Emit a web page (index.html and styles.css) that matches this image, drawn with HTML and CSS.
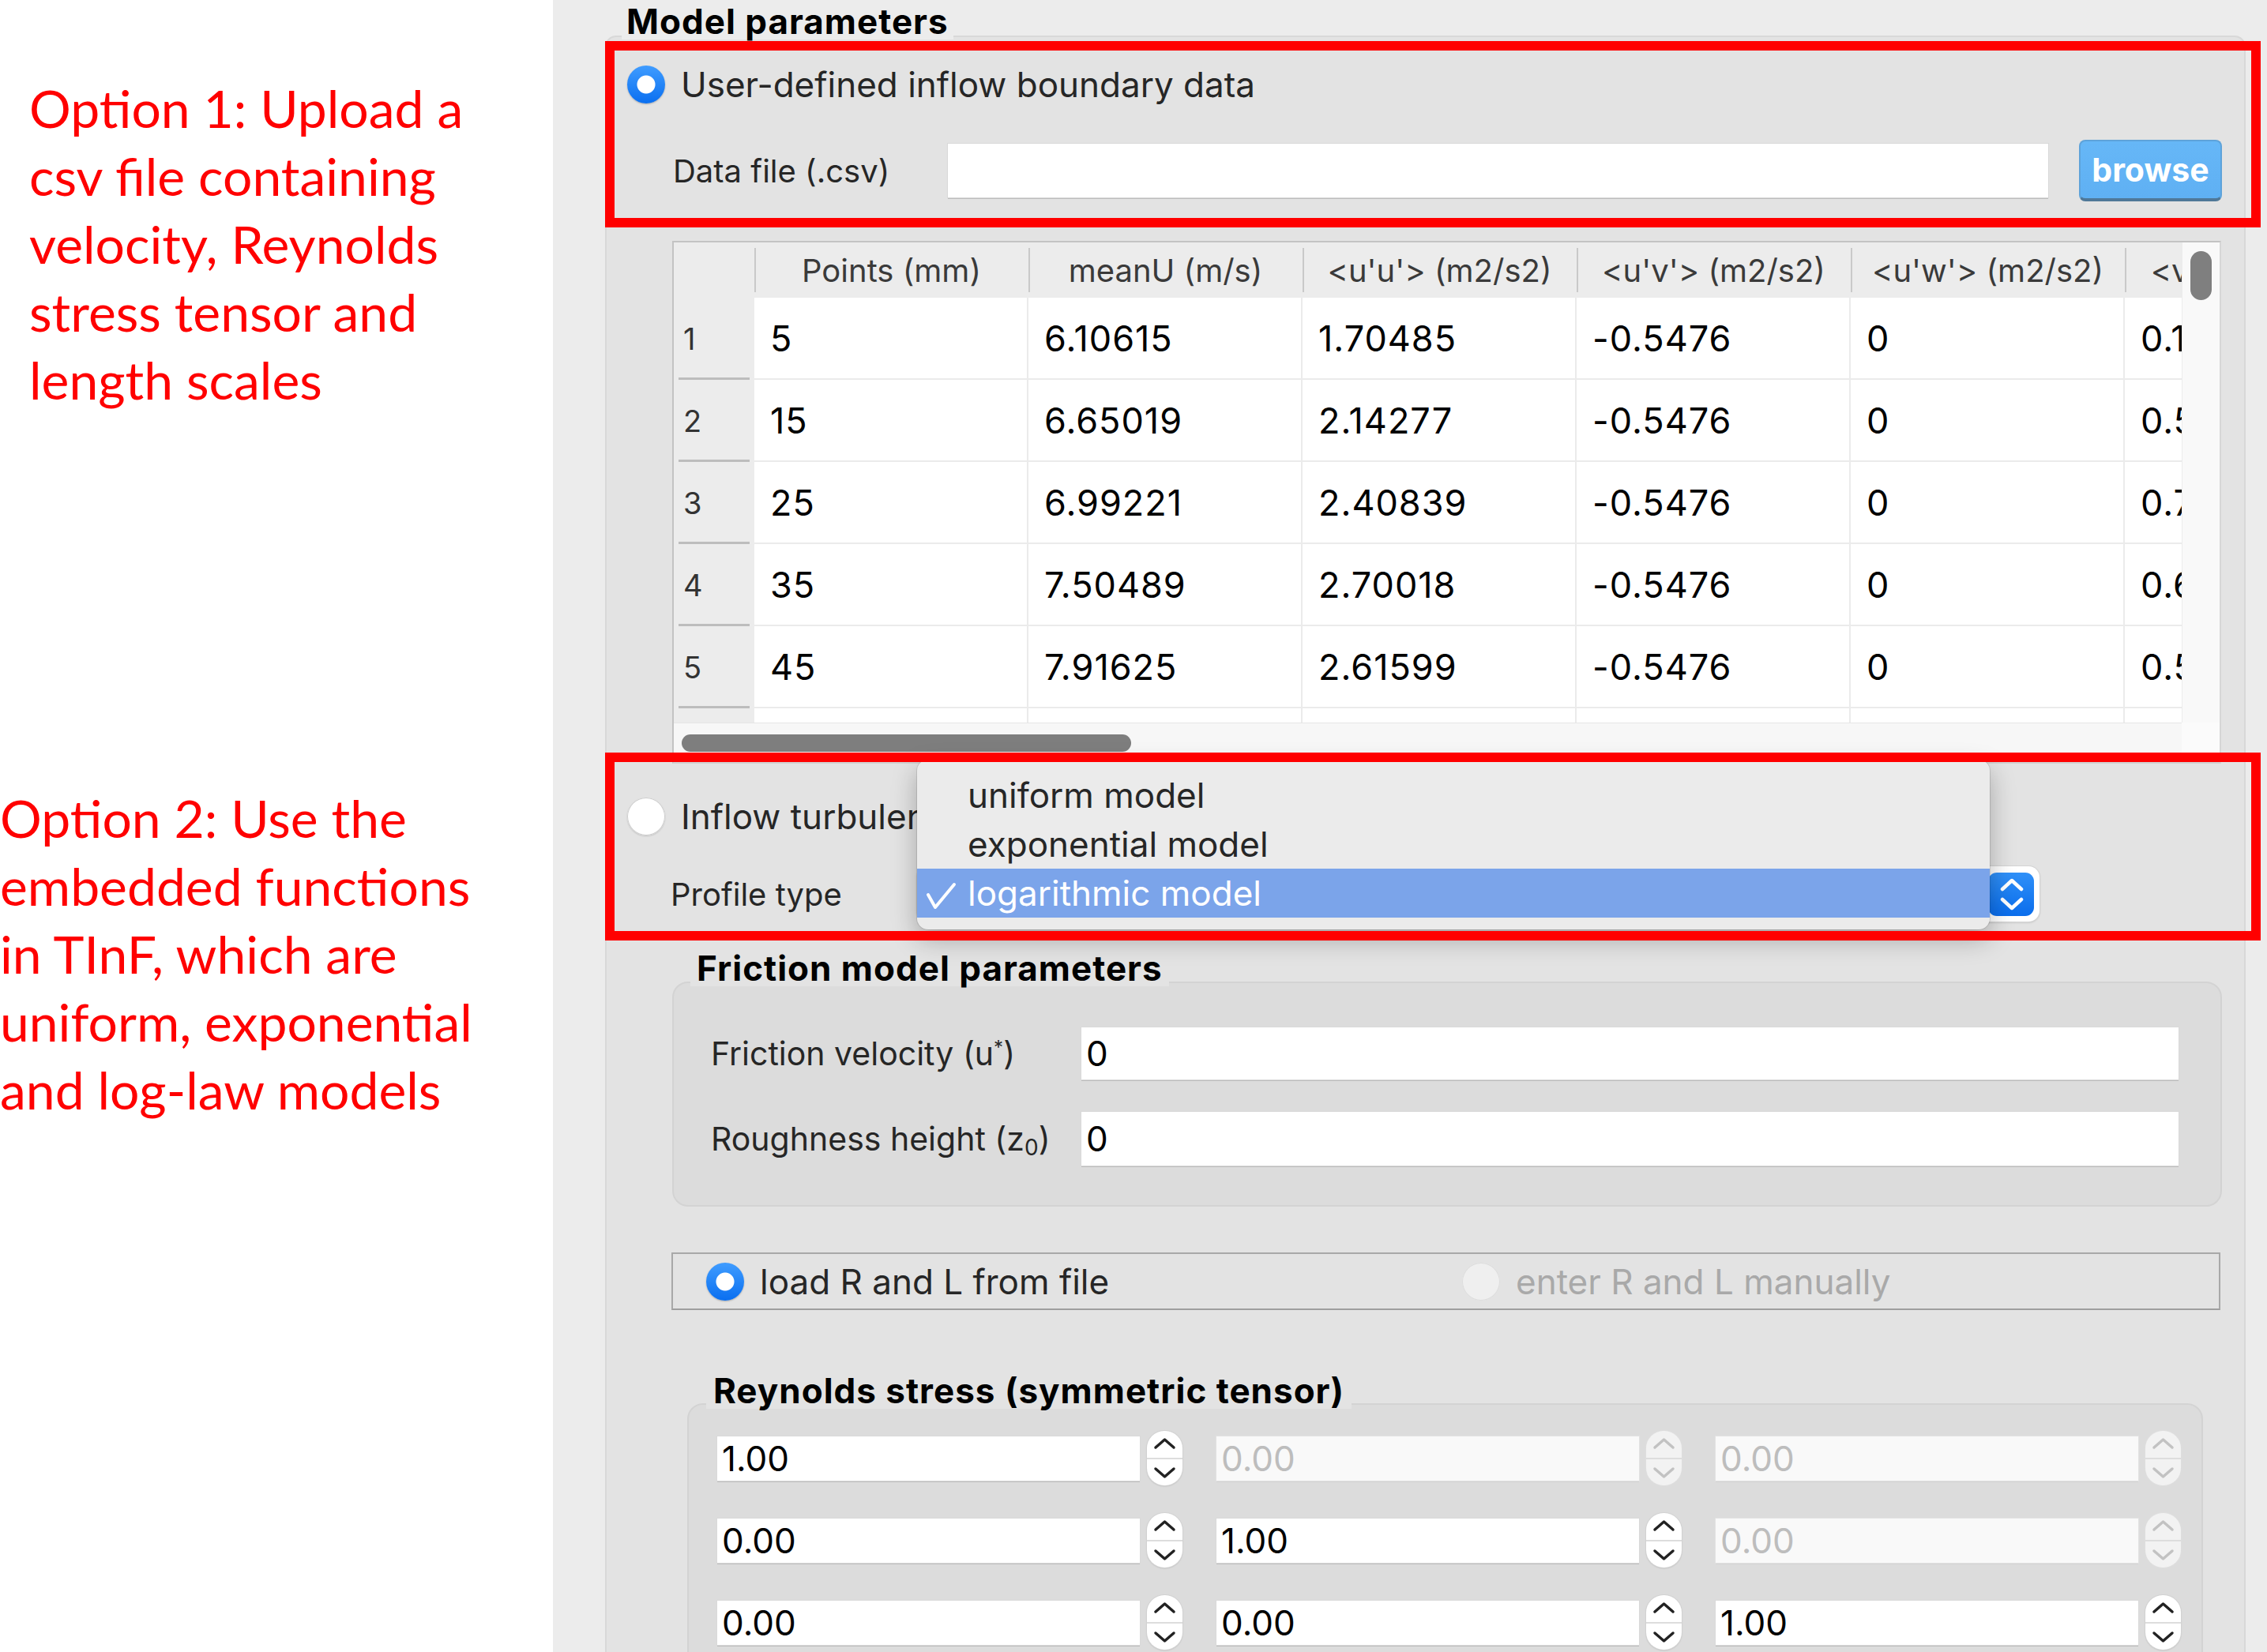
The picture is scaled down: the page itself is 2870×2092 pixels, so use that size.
FILE: index.html
```html
<!DOCTYPE html>
<html lang="en">
<head>
<meta charset="utf-8">
<title>TInF inflow options</title>
<link rel="stylesheet" href="styles.css">
</head>
<body>
<div class="page">
  <aside class="notes">
    <p class="note note1">Option 1: Upload a<br>csv file containing<br>velocity, Reynolds<br>stress tensor and<br>length scales</p>
    <p class="note note2">Option 2: Use the<br>embedded functions<br>in TInF, which are<br>uniform, exponential<br>and log-law models</p>
  </aside>

  <main class="panel">
    <section class="group model">
      <h2 class="group-title model-title">Model parameters</h2>

      <div class="radio-row row-user">
        <span class="radio on"></span>
        <span class="radio-text">User-defined inflow boundary data</span>
      </div>

      <div class="file-row">
        <span class="label file-label">Data file (.csv)</span>
        <div class="field file-field"></div>
        <button class="browse">browse</button>
      </div>

      <div class="tbl">
        <div class="tbl-body">
          <div class="th corner"></div>
          <div class="th">Points (mm)</div>
          <div class="th">meanU (m/s)</div>
          <div class="th">&lt;u'u'&gt; (m2/s2)</div>
          <div class="th">&lt;u'v'&gt; (m2/s2)</div>
          <div class="th">&lt;u'w'&gt; (m2/s2)</div>
          <div class="th">&lt;v'v'&gt; (m2/s2)</div>

          <div class="rh">1</div><div class="td">5</div><div class="td">6.10615</div><div class="td">1.70485</div><div class="td">-0.5476</div><div class="td">0</div><div class="td">0.1</div>
          <div class="rh">2</div><div class="td">15</div><div class="td">6.65019</div><div class="td">2.14277</div><div class="td">-0.5476</div><div class="td">0</div><div class="td">0.5</div>
          <div class="rh">3</div><div class="td">25</div><div class="td">6.99221</div><div class="td">2.40839</div><div class="td">-0.5476</div><div class="td">0</div><div class="td">0.7</div>
          <div class="rh">4</div><div class="td">35</div><div class="td">7.50489</div><div class="td">2.70018</div><div class="td">-0.5476</div><div class="td">0</div><div class="td">0.6</div>
          <div class="rh">5</div><div class="td">45</div><div class="td">7.91625</div><div class="td">2.61599</div><div class="td">-0.5476</div><div class="td">0</div><div class="td">0.5</div>
          <div class="rh"></div><div class="td"></div><div class="td"></div><div class="td"></div><div class="td"></div><div class="td"></div><div class="td"></div>
        </div>
        <div class="vscroll"><div class="vthumb"></div></div>
        <div class="hscroll"><div class="hthumb"></div></div>
        <div class="corner-sq"></div>
      </div>

      <div class="radio-row row-inflow">
        <span class="radio off"></span>
        <span class="radio-text">Inflow turbulence profile</span>
      </div>

      <div class="profile-row">
        <span class="label profile-label">Profile type</span>
        <div class="popup-btn">
          <span class="popup-arrows">
            <svg viewBox="0 0 58 55" width="58" height="55"><polyline points="18,21 30,10 42,21"/><polyline points="18,34 30,45 42,34"/></svg>
          </span>
          <ul class="menu">
            <li>uniform model</li>
            <li>exponential model</li>
            <li class="sel"><svg class="check" viewBox="0 0 40 36" width="40" height="36"><polyline points="3,16 12,32 36,3"/></svg>logarithmic model</li>
          </ul>
        </div>
      </div>

      <section class="group friction">
        <h3 class="group-title sub-title">Friction model parameters</h3>
        <div class="param-row first">
          <span class="label param-label">Friction velocity (u<sup>*</sup>)</span>
          <div class="field param-field">0</div>
        </div>
        <div class="param-row second">
          <span class="label param-label">Roughness height (z<sub>0</sub>)</span>
          <div class="field param-field tall">0</div>
        </div>
      </section>

      <div class="load-box">
        <label class="opt opt-file"><span class="radio on"></span><span class="radio-text">load R and L from file</span></label>
        <label class="opt opt-manual"><span class="radio dis"></span><span class="radio-text">enter R and L manually</span></label>
      </div>

      <section class="group reynolds">
        <h3 class="group-title sub-title rey-title">Reynolds stress (symmetric tensor)</h3>
        <div class="spin-row">
          <div class="spinbox"><div class="field spin-field">1.00</div><span class="stepper"><svg viewBox="0 0 45 69"><line x1="0" y1="35" x2="45" y2="35" class="div"/><polyline points="11,21 22.5,11 34,21"/><polyline points="11,48 22.5,58 34,48"/></svg></span></div>
          <div class="spinbox dis"><div class="field spin-field">0.00</div><span class="stepper"><svg viewBox="0 0 45 69"><line x1="0" y1="35" x2="45" y2="35" class="div"/><polyline points="11,21 22.5,11 34,21"/><polyline points="11,48 22.5,58 34,48"/></svg></span></div>
          <div class="spinbox dis"><div class="field spin-field">0.00</div><span class="stepper"><svg viewBox="0 0 45 69"><line x1="0" y1="35" x2="45" y2="35" class="div"/><polyline points="11,21 22.5,11 34,21"/><polyline points="11,48 22.5,58 34,48"/></svg></span></div>
        </div>
        <div class="spin-row">
          <div class="spinbox"><div class="field spin-field">0.00</div><span class="stepper"><svg viewBox="0 0 45 69"><line x1="0" y1="35" x2="45" y2="35" class="div"/><polyline points="11,21 22.5,11 34,21"/><polyline points="11,48 22.5,58 34,48"/></svg></span></div>
          <div class="spinbox"><div class="field spin-field">1.00</div><span class="stepper"><svg viewBox="0 0 45 69"><line x1="0" y1="35" x2="45" y2="35" class="div"/><polyline points="11,21 22.5,11 34,21"/><polyline points="11,48 22.5,58 34,48"/></svg></span></div>
          <div class="spinbox dis"><div class="field spin-field">0.00</div><span class="stepper"><svg viewBox="0 0 45 69"><line x1="0" y1="35" x2="45" y2="35" class="div"/><polyline points="11,21 22.5,11 34,21"/><polyline points="11,48 22.5,58 34,48"/></svg></span></div>
        </div>
        <div class="spin-row">
          <div class="spinbox"><div class="field spin-field">0.00</div><span class="stepper"><svg viewBox="0 0 45 69"><line x1="0" y1="35" x2="45" y2="35" class="div"/><polyline points="11,21 22.5,11 34,21"/><polyline points="11,48 22.5,58 34,48"/></svg></span></div>
          <div class="spinbox"><div class="field spin-field">0.00</div><span class="stepper"><svg viewBox="0 0 45 69"><line x1="0" y1="35" x2="45" y2="35" class="div"/><polyline points="11,21 22.5,11 34,21"/><polyline points="11,48 22.5,58 34,48"/></svg></span></div>
          <div class="spinbox"><div class="field spin-field">1.00</div><span class="stepper"><svg viewBox="0 0 45 69"><line x1="0" y1="35" x2="45" y2="35" class="div"/><polyline points="11,21 22.5,11 34,21"/><polyline points="11,48 22.5,58 34,48"/></svg></span></div>
        </div>
      </section>
    </section>
  </main>

  <div class="callout callout-1"></div>
  <div class="callout callout-2"></div>
</div>
</body>
</html>
```

FILE: styles.css
```css
* { box-sizing: border-box; margin: 0; padding: 0; }

html, body {
  width: 2870px;
  height: 2092px;
  overflow: hidden;
  background: #ffffff;
}

body {
  font-family: "Inter", "Liberation Sans", sans-serif;
  color: #262626;
}

.page {
  position: relative;
  display: flex;
  width: 2870px;
  height: 2092px;
}

/* ---------- left annotations ---------- */
.notes {
  flex: none;
  width: 700px;
  background: #ffffff;
  font-family: "Lato", "Liberation Sans", sans-serif;
  color: #ff0000;
  font-size: 66px;
  line-height: 86px;
  white-space: nowrap;
}
.note1 { margin-top: 94px; padding-left: 37px; }
.note2 { margin-top: 469px; }

/* ---------- right panel ---------- */
.panel {
  flex: 1;
  background: #ececec;
  padding: 45px 27px 0 66px;
}

.group {
  display: flex;
  flex-direction: column;
  border: 2px solid #d8d8d8;
  border-radius: 14px;
}

.model {
  background: #e3e3e3;
  min-height: 2200px;
}

.group-title {
  align-self: flex-start;
  font-size: 44px;
  line-height: 46px;
  letter-spacing: 1px;
  font-weight: 700;
  color: #000;
  white-space: nowrap;
}
.model-title {
  margin: -43px 0 0 19px;
  padding: 0 6px;
  background: #ececec;
}

.label {
  flex: none;
  font-size: 40px;
  white-space: nowrap;
  color: #262626;
}

.radio-text {
  font-size: 44px;
  white-space: nowrap;
  color: #262626;
}

/* radios */
.radio {
  flex: none;
  width: 48px;
  height: 48px;
  border-radius: 50%;
}
.radio.on {
  background:
    radial-gradient(circle, #ffffff 0 11px, rgba(255,255,255,0) 12px),
    linear-gradient(#3f9cff, #0a6ff0);
  box-shadow: 0 1px 2px rgba(0,0,0,0.25);
}
.radio.off {
  background: #ffffff;
  box-shadow: inset 0 0 0 1px #cdcdcd, 0 1px 2px rgba(0,0,0,0.15);
}
.radio.dis {
  background: #efefef;
  box-shadow: inset 0 0 0 1px #dcdcdc;
}

.radio-row {
  display: flex;
  align-items: center;
  gap: 20px;
  height: 60px;
  padding-left: 26px;
  overflow: hidden;
}
.row-user { margin-top: 27px; }
.row-inflow { margin-top: 37px; }

/* fields */
.field {
  background: #ffffff;
  box-shadow: 0 0 0 1px #d9d9d9, 0 2px 0 #bcbcbc;
  font-size: 44px;
  color: #000;
  display: flex;
  align-items: center;
  padding-left: 6px;
  white-space: nowrap;
}

/* data file row */
.file-row {
  display: flex;
  align-items: center;
  height: 78px;
  margin-top: 40px;
  padding-left: 84px;
}
.file-label { width: 348px; }
.file-field { width: 1393px; height: 68px; }
.browse {
  flex: none;
  width: 181px;
  height: 78px;
  margin-left: 39px;
  background: linear-gradient(#66b7f7, #5fb0f3);
  border: 2px solid #5ea3da;
  border-bottom: 4px solid #4f7898;
  border-radius: 8px;
  color: #ffffff;
  font-family: "Inter", "Liberation Sans", sans-serif;
  font-weight: 700;
  font-size: 41px;
  line-height: 1;
}

/* table */
.tbl {
  display: grid;
  grid-template-columns: 1909px 48px;
  grid-template-rows: 608px 50px;
  width: 1961px;
  height: 662px;
  margin: 50px 0 0 83px;
  border: 2px solid #c3c3c3;
  border-right-color: #d6d6d6;
  border-bottom-color: #d0d0d0;
  background: #ffffff;
}
.tbl-body {
  display: grid;
  grid-template-columns: 102px repeat(6, 347px);
  grid-template-rows: 70px repeat(6, 104px);
  overflow: hidden;
}
.th {
  background: #ececec linear-gradient(#c9c9c9, #c9c9c9) left 7px / 2px 56px no-repeat;
  font-size: 40px;
  color: #3a3a3a;
  display: flex;
  align-items: center;
  justify-content: center;
  white-space: nowrap;
}
.th.corner { background: #ececec; }
.rh {
  background: #ececec linear-gradient(#bdbdbd, #bdbdbd) 6px bottom / 90px 3px no-repeat;
  font-size: 38px;
  color: #333;
  display: flex;
  align-items: center;
  padding-left: 12px;
}
.td {
  border-right: 2px solid #ebebeb;
  border-bottom: 2px solid #ebebeb;
  font-size: 45px;
  letter-spacing: 1px;
  color: #000;
  display: flex;
  align-items: center;
  padding-left: 20px;
  white-space: nowrap;
  overflow: hidden;
}
.vscroll {
  background: #f9f9f9;
  border-left: 1px solid #ececec;
  padding: 11px 0 0 10px;
}
.vthumb {
  width: 27px;
  height: 62px;
  border-radius: 14px;
  background: #7f7f7f;
}
.hscroll {
  background: #f7f7f7;
  border-top: 1px solid #e6e6e6;
  padding: 14px 0 0 10px;
}
.hthumb {
  width: 569px;
  height: 22px;
  border-radius: 11px;
  background: #7e7e7e;
}
.corner-sq { background: #fbfbfb; }

/* profile row + popup */
.profile-row {
  display: flex;
  align-items: center;
  height: 70px;
  margin-top: 33px;
  padding-left: 81px;
}
.profile-label { width: 312px; }
.popup-btn {
  position: relative;
  flex: none;
  width: 1421px;
  height: 70px;
  background: #ffffff;
  border-radius: 14px;
  box-shadow: 0 0 0 1px #d4d4d4, 0 1px 3px rgba(0,0,0,0.2);
  display: flex;
  justify-content: flex-end;
  align-items: center;
  padding-right: 7px;
}
.popup-arrows {
  width: 58px;
  height: 55px;
  border-radius: 11px;
  background: linear-gradient(#2f90f8, #0a6dec);
}
.popup-arrows svg { display: block; }
.popup-arrows polyline {
  fill: none;
  stroke: #ffffff;
  stroke-width: 4.5;
  stroke-linecap: round;
  stroke-linejoin: round;
}
.menu {
  position: absolute;
  left: 0;
  top: -135px;
  width: 1358px;
  list-style: none;
  padding: 14px 0 15px;
  background: #ebebeb;
  border-radius: 14px;
  box-shadow: 0 12px 32px rgba(0,0,0,0.28), 0 0 0 1px rgba(0,0,0,0.1);
  z-index: 5;
}
.menu li {
  position: relative;
  height: 62px;
  line-height: 62px;
  padding-left: 64px;
  font-size: 44px;
  color: #262626;
  white-space: nowrap;
}
.menu li.sel {
  background: #7ba4ea;
  color: #ffffff;
}
.check {
  position: absolute;
  left: 11px;
  top: 17px;
}
.check polyline {
  fill: none;
  stroke: #ffffff;
  stroke-width: 4;
  stroke-linecap: round;
  stroke-linejoin: round;
}

/* friction group */
.friction {
  width: 1962px;
  height: 285px;
  margin: 76px 0 0 83px;
  background: #dcdcdc;
  border-color: #d3d3d3;
  border-radius: 20px;
}
.sub-title {
  margin: -42px 0 0 21px;
  padding: 0 8px;
  background: #e3e3e3;
}
.param-row {
  display: flex;
  align-items: center;
  padding-left: 47px;
}
.param-row.first { margin-top: 52px; height: 66px; }
.param-row.second { margin-top: 41px; height: 68px; }
.param-label { width: 469px; font-size: 41px; }
.param-label sup { font-size: 24px; vertical-align: 14px; line-height: 0; }
.param-label sub { font-size: 28px; vertical-align: -6px; line-height: 0; }
.param-field { width: 1389px; height: 66px; }
.param-field.tall { height: 68px; }

/* load R/L box */
.load-box {
  display: flex;
  align-items: center;
  width: 1961px;
  height: 73px;
  margin: 58px 0 0 82px;
  padding-left: 42px;
  border: 2px solid #a8a8a8;
  border-bottom-color: #9e9e9e;
}
.opt {
  display: flex;
  align-items: center;
  gap: 20px;
}
.opt-file { width: 957px; }
.opt-manual .radio-text { color: #a9a9a9; }

/* reynolds group */
.reynolds {
  width: 1919px;
  min-height: 420px;
  margin: 118px 0 0 102px;
  background: #dcdcdc;
  border-color: #d3d3d3;
  border-radius: 20px;
}
.rey-title {
  margin: -41px 0 0 22px;
  padding: 0 9px;
}
.spin-row {
  display: flex;
  gap: 43px;
  height: 69px;
  padding-left: 36px;
  margin-top: 35px;
}
.spin-row:first-of-type { margin-top: 28px; }
.spinbox {
  display: flex;
  align-items: center;
}
.spin-field { width: 535px; height: 56px; }
.stepper {
  width: 45px;
  height: 69px;
  margin-left: 9px;
  border-radius: 22px;
  background: #ffffff;
  box-shadow: 0 0 0 1px #d2d2d2, 0 1px 2px rgba(0,0,0,0.2);
  overflow: hidden;
}
.stepper svg { display: block; width: 45px; height: 69px; }
.stepper polyline {
  fill: none;
  stroke: #222;
  stroke-width: 3.5;
  stroke-linecap: round;
  stroke-linejoin: round;
}
.stepper .div { stroke: #dddddd; stroke-width: 2; }
.spinbox.dis .spin-field {
  background: #f9f9f9;
  color: #bdbdbd;
  box-shadow: 0 0 0 1px #e2e2e2, 0 2px 0 #d2d2d2;
}
.spinbox.dis .stepper { background: #f2f2f2; box-shadow: 0 0 0 1px #dedede; }
.spinbox.dis .stepper polyline { stroke: #c2c2c2; }

/* red callout frames (overlay) */
.callout {
  position: absolute;
  left: 766px;
  width: 2096px;
  border: 12px solid #ff0000;
  z-index: 10;
  pointer-events: none;
}
.callout-1 { top: 52px; height: 236px; }
.callout-2 { top: 953px; height: 238px; }
```
